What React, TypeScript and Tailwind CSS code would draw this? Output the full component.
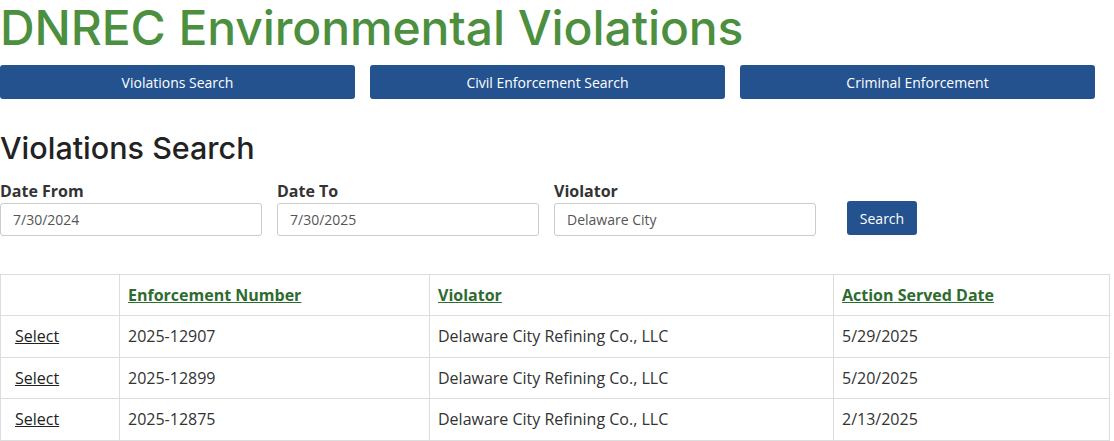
const rows = [
  { num: '2025-12907', violator: 'Delaware City Refining Co., LLC', date: '5/29/2025' },
  { num: '2025-12899', violator: 'Delaware City Refining Co., LLC', date: '5/20/2025' },
  { num: '2025-12875', violator: 'Delaware City Refining Co., LLC', date: '2/13/2025' },
];

const navButtons = ['Violations Search', 'Civil Enforcement Search', 'Criminal Enforcement'];

const fields = [
  { label: 'Date From', value: '7/30/2024' },
  { label: 'Date To', value: '7/30/2025' },
  { label: 'Violator', value: 'Delaware City' },
];

export default function App() {
  return (
    <div className="w-[1110px] bg-white pt-[1px] text-[#333] [font-family:'Open_Sans',sans-serif]">
      <h1 className="-mt-[3px] text-[48px] font-medium leading-[60px] tracking-[-0.1px] whitespace-nowrap text-[#4b8f3f] [font-family:Inter,sans-serif]">
        DNREC Environmental Violations
      </h1>

      <div className="mt-[7px] flex gap-[15px]">
        {navButtons.map((label) => (
          <button
            key={label}
            type="button"
            className="h-[34px] w-[355px] rounded-[3px] bg-[#24528f] text-[14px] text-white"
          >
            {label}
          </button>
        ))}
      </div>

      <h2 className="mt-[31px] text-[30.5px] font-medium leading-[36px] text-[#222] [font-family:Inter,sans-serif]">
        Violations Search
      </h2>

      <div className="mt-[14px] flex items-end gap-[15px]">
        {fields.map((field) => (
          <div key={field.label} className="w-[262px]">
            <div className="text-[16px] font-bold leading-[22px] text-[#333]">{field.label}</div>
            <input
              readOnly
              value={field.value}
              className="mt-[1px] h-[33px] w-full rounded-[3px] border border-[#ccc] px-[12px] text-[14px] text-[#555] outline-none"
            />
          </div>
        ))}
        <button
          type="button"
          className="mb-[1px] ml-[16px] h-[34px] w-[70px] rounded-[3px] bg-[#24528f] text-[14px] text-white"
        >
          Search
        </button>
      </div>

      <table className="mt-[38px] w-[1110px] border-collapse text-left text-[16px]">
        <thead>
          <tr className="h-[41px]">
            <th className="w-[119px] border border-[#ddd]"></th>
            <th className="w-[310px] border border-[#ddd] px-[8px] font-bold">
              <a className="text-[#2e6b2f] underline">Enforcement Number</a>
            </th>
            <th className="w-[404px] border border-[#ddd] px-[8px] font-bold">
              <a className="text-[#2e6b2f] underline">Violator</a>
            </th>
            <th className="border border-[#ddd] px-[8px] font-bold">
              <a className="text-[#2e6b2f] underline">Action Served Date</a>
            </th>
          </tr>
        </thead>
        <tbody>
          {rows.map((row) => (
            <tr key={row.num} className="h-[41.5px]">
              <td className="border border-[#ddd] pl-[14px]">
                <a className="text-[#222] underline">Select</a>
              </td>
              <td className="border border-[#ddd] px-[8px]">{row.num}</td>
              <td className="border border-[#ddd] px-[8px]">{row.violator}</td>
              <td className="border border-[#ddd] px-[8px]">{row.date}</td>
            </tr>
          ))}
        </tbody>
      </table>
    </div>
  );
}
